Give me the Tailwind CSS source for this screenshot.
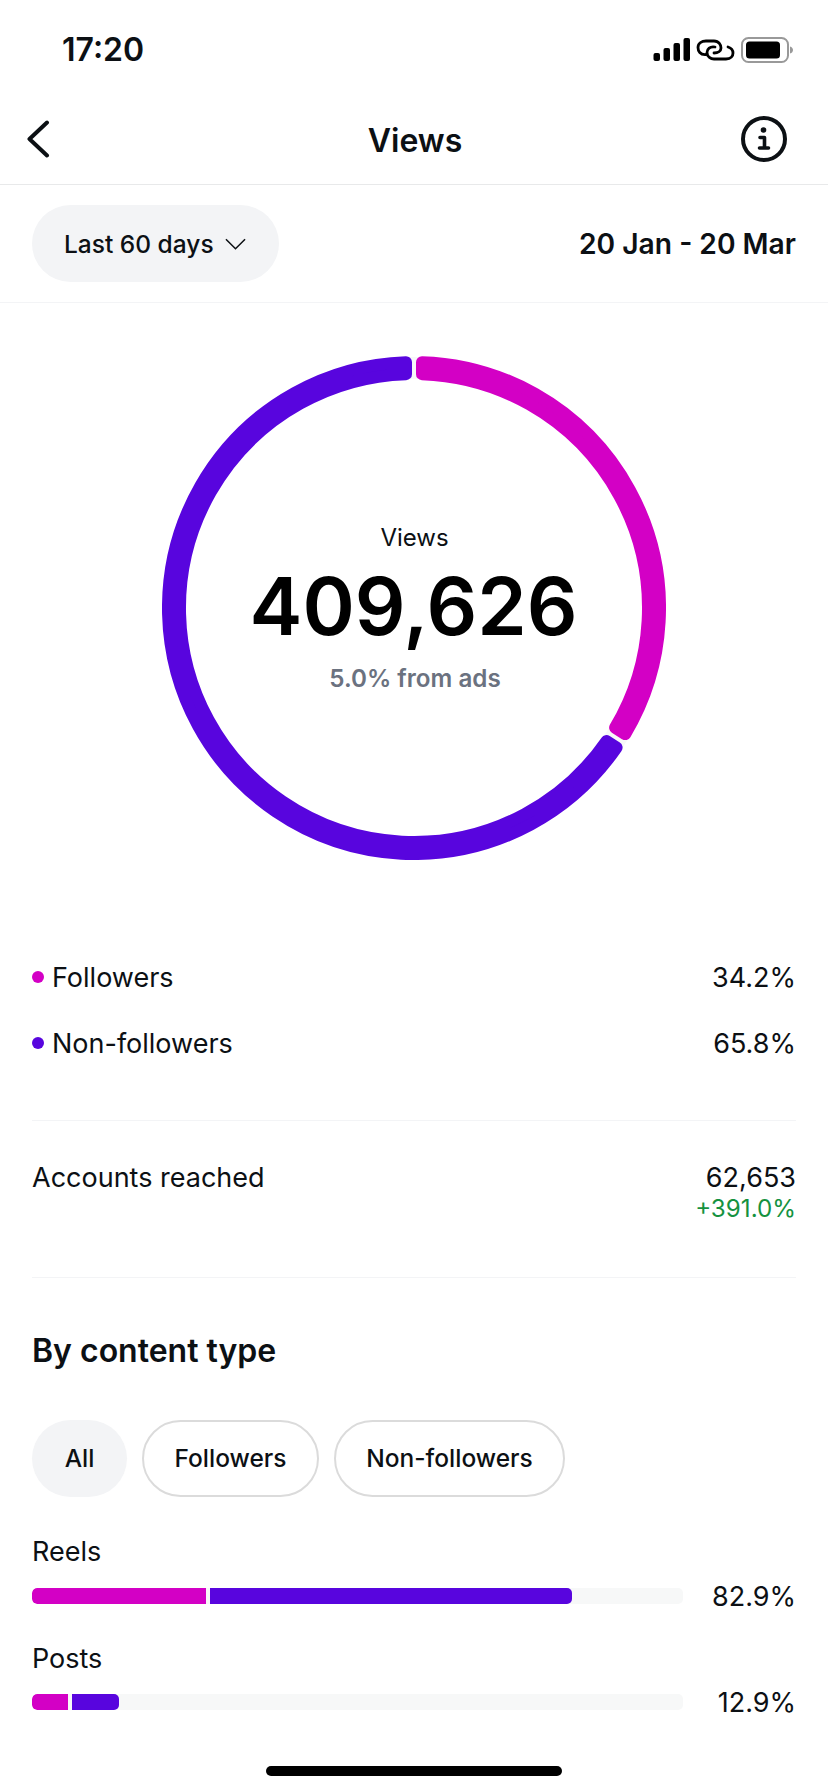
<!DOCTYPE html>
<html lang="en">
<head>
  <meta charset="UTF-8">
  <meta name="viewport" content="width=device-width, initial-scale=1.0">
  <title>Views</title>
  <script src="https://cdn.jsdelivr.net/npm/@tailwindcss/browser@4"></script>
</head>
<body class="bg-white">
  <div class="w-[828px] h-[1792px] overflow-hidden flex flex-col font-[Inter] text-[#0c1014]">

    <!-- status bar -->
    <div class="h-[94px] shrink-0 pt-[5px] pl-[62px] pr-[34px] flex items-center justify-between">
      <span class="text-[32px] leading-[36px] font-semibold">17:20</span>
      <svg width="142" height="26" viewBox="0 0 142 26" class="mt-[1px]">
        <g transform="translate(1.500 0)">
          <rect x="0" y="16" width="6.500" height="8" rx="2" fill="#000"/>
          <rect x="10" y="11" width="6.500" height="13" rx="2" fill="#000"/>
          <rect x="20" y="6" width="6.500" height="18" rx="2" fill="#000"/>
          <rect x="30" y="1" width="6.500" height="23" rx="2" fill="#000"/>
        </g>
        <g transform="translate(38 -5)" fill="none" stroke="#000" stroke-width="2.800" stroke-linecap="round">
          <path d="M16 22.500C10 23 8 19 8 15.500 8 11 12 9 16 9H24C29 9 31 13 31 16 31 19 28 21 24 21"/>
          <path d="M25 15C20 14 17 17 17 20.500 17 25 21 27 24 27H36C41 27 43 24 43 21 43 18 41 16 38 15"/>
        </g>
        <rect x="90" y="1" width="46" height="24" rx="6.500" fill="none" stroke="#999" stroke-width="2"/>
        <rect x="94" y="4.500" width="34" height="17" rx="3.500" fill="#000"/>
        <path d="M138 9.500c2 .5 3 2 3 3.500s-1 3-3 3.500z" fill="#999"/>
      </svg>
    </div>

    <!-- nav -->
    <div class="h-[91px] shrink-0 border-b border-[#e8e9ea] pl-[43px] pr-[41px] grid grid-cols-[1fr_auto_1fr] items-center">
      <svg width="24" height="38" viewBox="0 0 24 38" class="-ml-[17px]"><path d="M21 2.500 3.500 19 21 35.500" fill="none" stroke="#0c1014" stroke-width="4" stroke-linecap="round" stroke-linejoin="round"/></svg>
      <span class="text-[32px] leading-[36px] font-semibold mt-[4px]">Views</span>
      <svg width="46" height="46" viewBox="0 0 46 46" class="justify-self-end">
        <circle cx="23" cy="23" r="21" fill="none" stroke="#0c1014" stroke-width="4"/>
        <circle cx="22.500" cy="14" r="2.800" fill="#0c1014"/>
        <path d="M19 21.500h4.500v10.500M18.500 32h9" fill="none" stroke="#0c1014" stroke-width="3.600" stroke-linecap="round" stroke-linejoin="round"/>
      </svg>
    </div>

    <!-- date filter -->
    <div class="h-[118px] shrink-0 border-b border-[#f3f4f6] px-[32px] flex items-center justify-between">
      <div class="h-[77px] w-[247px] rounded-full bg-[#f3f4f6] flex items-center pl-[32px] gap-[11px]">
        <span class="text-[24.500px] leading-[30px] font-medium">Last 60 days</span>
        <svg width="21" height="12" viewBox="0 0 22 12"><path d="M1 1 11 11 21 1" fill="none" stroke="#0c1014" stroke-width="1.600"/></svg>
      </div>
      <span class="text-[28.200px] leading-[34px] font-semibold">20 Jan - 20 Mar</span>
    </div>

    <!-- ring -->
    <div class="shrink-0 pt-[53px] flex justify-center">
      <div class="grid w-[504px] h-[504px]">
        <svg width="504" height="504" viewBox="0 0 504 504" class="col-start-1 row-start-1">
          <circle cx="252" cy="252" r="240" fill="none" stroke="#f7f8f8" stroke-width="22"/>
          <path d="M260 6.130A246 246 0 0 1 463.220 378.090L453.110 371.600A234 234 0 0 0 260 18.140Z" fill="#d300c5" stroke="#d300c5" stroke-width="12" stroke-linejoin="round"/>
          <path d="M454.580 391.550A246 246 0 1 1 244 6.130L244 18.140A234 234 0 1 0 444.470 385.060Z" fill="#5805de" stroke="#5805de" stroke-width="12" stroke-linejoin="round"/>
        </svg>
        <div class="col-start-1 row-start-1 flex flex-col items-center pt-[167px] pl-[1px]">
          <span class="text-[24px] leading-[30px] text-[#0c1014]">Views</span>
          <span class="text-[79.400px] leading-[88px] font-semibold text-black mt-[9px] -ml-[2px]">409,626</span>
          <span class="text-[24.200px] leading-[30px] font-semibold text-[#6b7280] mt-[14px] ml-[1px]">5.0% from ads</span>
        </div>
      </div>
    </div>

    <!-- legend -->
    <div class="shrink-0 mt-[84px] px-[32px] text-[27px] leading-[34px]">
      <div class="h-[66px] flex items-center justify-between">
        <div class="flex items-center gap-[8px]"><span class="w-[12px] h-[12px] rounded-full bg-[#d300c5]"></span><span class="pt-[2px]">Followers</span></div>
        <span class="pt-[2px]">34.2%</span>
      </div>
      <div class="h-[66px] flex items-center justify-between">
        <div class="flex items-center gap-[8px]"><span class="w-[12px] h-[12px] rounded-full bg-[#5805de]"></span><span class="pt-[2px]">Non-followers</span></div>
        <span class="pt-[2px]">65.8%</span>
      </div>
    </div>

    <!-- reach -->
    <div class="shrink-0 mx-[32px] mt-[44px] border-t border-[#f3f4f6] pt-[40px] flex justify-between text-[27px] leading-[34px]">
      <span>Accounts reached</span>
      <div class="flex flex-col items-end">
        <span>62,653</span>
        <span class="text-[24.200px] leading-[30px] -mt-[1px] text-[#15923f]">+391.0%</span>
      </div>
    </div>

    <!-- content type -->
    <div class="shrink-0 mx-[32px] mt-[53px] border-t border-[#f3f4f6]">
      <h2 class="mt-[55px] text-[32px] leading-[36px] font-semibold">By content type</h2>
      <div class="mt-[51px] flex gap-[15px] text-[24.500px] font-medium">
        <span class="h-[77px] w-[95px] rounded-full bg-[#f3f4f6] flex items-center justify-center">All</span>
        <span class="h-[77px] w-[177px] rounded-full border-2 border-[#dbdbdb] flex items-center justify-center">Followers</span>
        <span class="h-[77px] w-[231px] rounded-full border-2 border-[#dbdbdb] flex items-center justify-center">Non-followers</span>
      </div>

      <div class="mt-[38px] text-[27px] leading-[34px]">Reels</div>
      <div class="mt-[9px] flex items-center justify-between text-[27px] leading-[34px]">
        <div class="w-[651px] h-[16px] rounded-[5px] bg-[#f7f8f8] flex overflow-hidden">
          <div class="w-[174px] bg-[#d300c5] rounded-l-[5px]"></div>
          <div class="w-[362px] ml-[4px] bg-[#5805de] rounded-r-[5px]"></div>
        </div>
        <span class="pt-[2px]">82.9%</span>
      </div>

      <div class="mt-[28px] text-[27px] leading-[34px]">Posts</div>
      <div class="mt-[8px] flex items-center justify-between text-[27px] leading-[34px]">
        <div class="w-[651px] h-[16px] rounded-[5px] bg-[#f7f8f8] flex overflow-hidden">
          <div class="w-[36px] bg-[#d300c5] rounded-l-[5px]"></div>
          <div class="w-[47px] ml-[4px] bg-[#5805de] rounded-r-[5px]"></div>
        </div>
        <span class="pt-[2px]">12.9%</span>
      </div>
    </div>

    <!-- home indicator -->
    <div class="shrink-0 self-center mt-[46px] w-[296px] h-[10px] rounded-full bg-black"></div>
  </div>
</body>
</html>
